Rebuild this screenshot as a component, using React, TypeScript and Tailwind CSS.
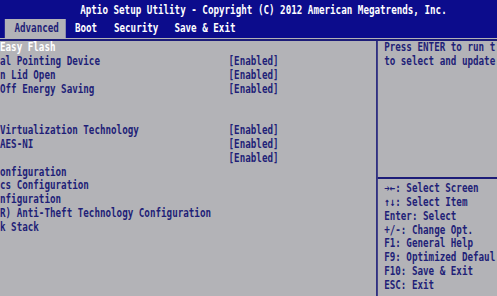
import React from "react";

const rows: { label: string; value?: string; selected?: boolean }[] = [
  { label: "Easy Flash", selected: true },
  { label: "al Pointing Device", value: "[Enabled]" },
  { label: "n Lid Open", value: "[Enabled]" },
  { label: "Off Energy Saving", value: "[Enabled]" },
  { label: "" },
  { label: "" },
  { label: "Virtualization Technology", value: "[Enabled]" },
  { label: "AES-NI", value: "[Enabled]" },
  { label: "", value: "[Enabled]" },
  { label: "onfiguration" },
  { label: "cs Configuration" },
  { label: "nfiguration" },
  { label: "R) Anti-Theft Technology Configuration" },
  { label: "k Stack" },
];

const help = [
  "➔←: Select Screen",
  "↑↓: Select Item",
  "Enter: Select",
  "+/-: Change Opt.",
  "F1: General Help",
  "F9: Optimized Defaul",
  "F10: Save & Exit",
  "ESC: Exit",
];

export default function App() {
  return (
    <div className="w-[497px] h-[296px] overflow-hidden bg-[#b3b3b7]">
      <div
        className="w-[620px] h-[296px] origin-top-left scale-x-[0.802] flex flex-col text-[11.5px] leading-[13.85px] font-bold text-[#1f1f78] whitespace-nowrap"
        style={{ fontFamily: '"DejaVu Sans Mono", "Liberation Mono", monospace' }}
      >
        {/* Top blue bar */}
        <div className="h-[38px] bg-[#0c0c8c] flex flex-col">
          <div className="pl-[100px] pt-[4px] text-white">
            Aptio Setup Utility - Copyright (C) 2012 American Megatrends, Inc.
          </div>
          <div className="flex pl-[6px] mt-[1px] h-[20px]">
            <div className="bg-[#b3b3b7] text-[#1f1f78] pl-[12px] pr-[9px] pt-[3px]">Advanced</div>
            <div className="text-white px-[11px] pt-[3px]">Boot</div>
            <div className="text-white px-[10px] pt-[3px]">Security</div>
            <div className="text-white px-[10px] pt-[3px]">Save &amp; Exit</div>
          </div>
        </div>
        <div className="h-[1px] bg-[#b3b3b7]" />
        <div className="h-[2px] bg-[#1c1c78]" />
        {/* Body */}
        <div className="flex-1 grid grid-cols-[469px_2px_1fr]">
          <div className="flex flex-col">
            {rows.map((r, i) => (
              <div key={i} className="flex h-[13.85px]">
                <div className={`w-[285px] ${r.selected ? "text-white" : ""}`}>{r.label}</div>
                <div>{r.value ?? ""}</div>
              </div>
            ))}
          </div>
          <div className="bg-[#1c1c78]" />
          <div className="flex flex-col">
            <div className="h-[136px] pl-[8px]">
              <div>Press ENTER to run t</div>
              <div>to select and update</div>
            </div>
            <div className="h-[2px] bg-[#1c1c78]" />
            <div className="pl-[8px] pt-[3px]">
              {help.map((h) => (
                <div key={h} className="h-[13.85px]">{h}</div>
              ))}
            </div>
          </div>
        </div>
      </div>
    </div>
  );
}
